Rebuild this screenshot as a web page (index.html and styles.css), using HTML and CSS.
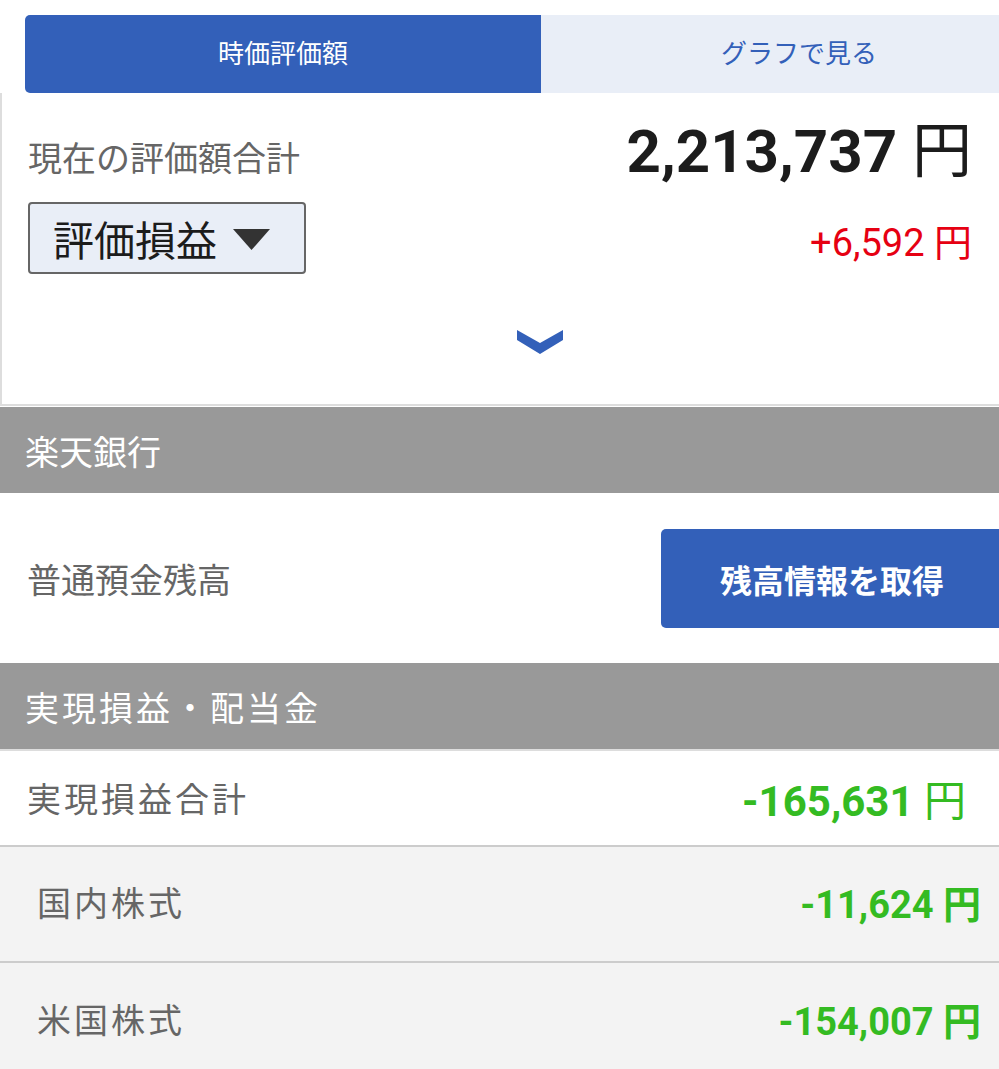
FILE: index.html
```html
<!DOCTYPE html>
<html lang="ja">
<head>
<meta charset="utf-8">
<link rel="stylesheet" href="styles.css">
</head>
<body>
<div class="page">
  <div class="tabs">
    <div class="tab tab-active">時価評価額</div>
    <div class="tab tab-rest">グラフで見る</div>
  </div>

  <div class="summary">
    <div class="sum-row1">
      <div class="sum-label">現在の評価額合計</div>
      <div class="sum-total"><span class="num">2,213,737</span> <span class="yen">円</span></div>
    </div>
    <div class="sum-row2">
      <div class="select">評価損益
        <svg class="tri" width="37" height="21" viewBox="0 0 37 21"><polygon points="0,0 37,0 18.5,21" fill="#333"/></svg>
      </div>
      <div class="sum-gain">+6,592 円</div>
    </div>
    <div class="chev-row">
      <svg width="46" height="24" viewBox="0 0 46 24"><polygon points="0,0 23,13 46,0 46,10 23,24 0,10" fill="#3360b9"/></svg>
    </div>
  </div>

  <div class="sec-head">楽天銀行</div>
  <div class="bank-row">
    <div class="row-label">普通預金残高</div>
    <div class="btn">残高情報を取得</div>
  </div>

  <div class="sec-head sec-head-2">実現損益・配当金</div>
  <div class="pl-row pl-total">
    <div class="row-label wide">実現損益合計</div>
    <div class="pl-val"><span class="num">-165,631</span> <span class="yen-light">円</span></div>
  </div>
  <div class="pl-row pl-sub">
    <div class="row-label wide">国内株式</div>
    <div class="pl-val sub-val">-11,624 円</div>
  </div>
  <div class="pl-row pl-sub last">
    <div class="row-label wide">米国株式</div>
    <div class="pl-val sub-val">-154,007 円</div>
  </div>
</div>
</body>
</html>
```

FILE: styles.css
```css
html, body {
  margin: 0;
  padding: 0;
  background: #ffffff;
}
body {
  font-family: Roboto, "Noto Sans CJK JP", sans-serif;
}
.page {
  width: 999px;
  overflow: hidden;
}

/* tabs */
.tabs {
  display: flex;
  margin: 15px 0 0 25px;
  height: 78px;
}
.tab {
  display: flex;
  align-items: center;
  justify-content: center;
  font-size: 26px;
  padding-bottom: 5px;
  box-sizing: border-box;
  color: #3360b9;
  background: #e9eef7;
}
.tab-active {
  width: 516px;
  background: #3360b9;
  color: #ffffff;
  border-radius: 5px 0 0 5px;
}
.tab-rest {
  flex: 1;
  padding-left: 58px;
}

/* summary card */
.summary {
  border-left: 2px solid #dddddd;
  border-bottom: 2px solid #dddddd;
  height: 313px;
  box-sizing: border-box;
  padding: 0 27px 0 26px;
}
.sum-row1 {
  display: flex;
  justify-content: space-between;
  align-items: center;
  padding-top: 15px;
  height: 74px;
}
.sum-label {
  font-size: 34px;
  color: #666666;
  margin-top: 23px;
}
.sum-total {
  font-size: 60px;
  font-weight: 700;
  color: #1c1c1c;
}
.sum-total .yen {
  font-weight: 400;
}
.sum-row2 {
  display: flex;
  justify-content: space-between;
  align-items: center;
  margin-top: 20px;
}
.select {
  display: flex;
  align-items: center;
  gap: 16px;
  width: 278px;
  height: 72px;
  box-sizing: border-box;
  border: 2px solid #666666;
  border-radius: 4px;
  background: #e9eef7;
  padding-left: 23px;
  font-size: 41px;
  color: #1c1c1c;
}
.tri {
  display: block;
  margin-top: 3px;
}
.sum-gain {
  font-size: 38px;
  color: #e60012;
  margin-top: 2px;
}
.chev-row {
  display: flex;
  justify-content: center;
  padding-left: 80px;
  margin-top: 56px;
}
.chev-row svg {
  display: block;
}

/* section headers */
.sec-head {
  height: 86px;
  margin-top: 1px;
  background: #999999;
  color: #ffffff;
  font-size: 34px;
  display: flex;
  align-items: center;
  padding-left: 25px;
}
.sec-head-2 {
  margin-top: 0;
  letter-spacing: 3px;
  border-bottom: 2px solid #dddddd;
}

/* bank row */
.bank-row {
  height: 170px;
  display: flex;
  align-items: center;
  justify-content: space-between;
  padding-left: 27px;
}
.row-label {
  font-size: 34px;
  color: #666666;
}
.btn {
  width: 338px;
  height: 99px;
  box-sizing: border-box;
  padding-left: 4px;
  background: #3360b9;
  border-radius: 5px 0 0 5px;
  color: #ffffff;
  font-size: 32px;
  font-weight: 700;
  display: flex;
  align-items: center;
  justify-content: center;
  margin-top: 1px;
}

/* P/L rows */
.pl-row {
  display: flex;
  align-items: center;
  justify-content: space-between;
  border-bottom: 2px solid #cccccc;
  box-sizing: border-box;
}
.pl-total {
  height: 96px;
  padding: 0 33px 2px 27px;
  background: #ffffff;
}
.pl-sub {
  height: 116px;
  padding: 0 18px 5px 37px;
  background: #f3f3f3;
}
.last {
  border-bottom: none;
}
.wide {
  letter-spacing: 3px;
}
.pl-val {
  color: #34bb22;
  font-weight: 700;
}
.pl-total .pl-val {
  font-size: 42px;
}
.yen-light {
  font-weight: 400;
}
.sub-val {
  font-size: 38px;
}
```
